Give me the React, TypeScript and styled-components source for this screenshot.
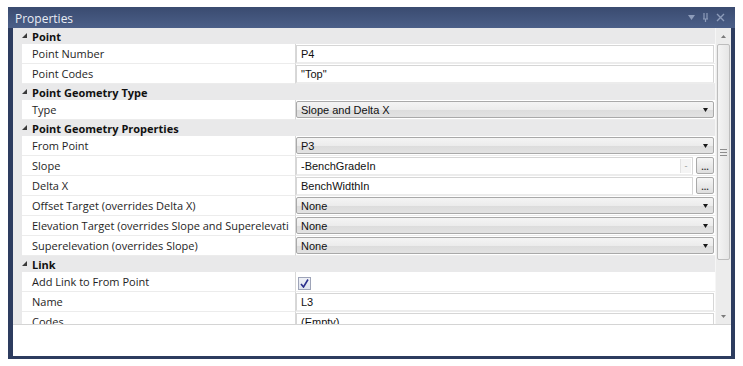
import React from 'react'
import styled, { createGlobalStyle } from 'styled-components'

const GlobalStyle = createGlobalStyle`
  html, body {
    margin: 0;
    padding: 0;
    background: #ffffff;
  }
  body {
    font-family: "Open Sans", "Noto Sans", sans-serif;
  }
`

type Prop = {
  label: string
  value?: string
  kind?: 'text' | 'select' | 'check' | 'builder' | 'expr'
}

type Category = {
  title: string
  props: Prop[]
}

const categories: Category[] = [
  {
    title: 'Point',
    props: [
      { label: 'Point Number', value: 'P4' },
      { label: 'Point Codes', value: '"Top"' },
    ],
  },
  {
    title: 'Point Geometry Type',
    props: [{ label: 'Type', value: 'Slope and Delta X', kind: 'select' }],
  },
  {
    title: 'Point Geometry Properties',
    props: [
      { label: 'From Point', value: 'P3', kind: 'select' },
      { label: 'Slope', value: '-BenchGradeIn', kind: 'expr' },
      { label: 'Delta X', value: 'BenchWidthIn', kind: 'builder' },
      { label: 'Offset Target (overrides Delta X)', value: 'None', kind: 'select' },
      { label: 'Elevation Target (overrides Slope and Superelevati', value: 'None', kind: 'select' },
      { label: 'Superelevation (overrides Slope)', value: 'None', kind: 'select' },
    ],
  },
  {
    title: 'Link',
    props: [
      { label: 'Add Link to From Point', kind: 'check' },
      { label: 'Name', value: 'L3' },
      { label: 'Codes', value: '(Empty)' },
    ],
  },
]

const Arrow = () => (
  <svg width="5" height="4" viewBox="0 0 5 4">
    <path d="M0 0 H5 L2.5 4 Z" fill="#1a1a1a" />
  </svg>
)

const Expander = () => (
  <svg width="5" height="5" viewBox="0 0 5 5">
    <path d="M5 0 V5 H0 Z" fill="#3a3a3a" />
  </svg>
)

const App: React.FC = () => {
  return (
    <>
      <GlobalStyle />
      <Window>
        <TitleBar>
          <Title>Properties</Title>
          <TitleButtons>
            <svg width="7" height="5" viewBox="0 0 7 5">
              <path d="M0 0 H7 L3.5 5 Z" fill="#8d9cba" />
            </svg>
            <svg width="7" height="9" viewBox="0 0 7 9">
              <path d="M2 0 V6 M5 0 V6 M1 6 H6 M3.5 6 V9" stroke="#8d9cba" strokeWidth="1.2" fill="none" />
            </svg>
            <svg width="9" height="9" viewBox="0 0 9 9">
              <path d="M1 1 L8 8 M8 1 L1 8" stroke="#8d9cba" strokeWidth="1.4" />
            </svg>
          </TitleButtons>
        </TitleBar>
        <Body>
          <GridArea>
            <List>
              {categories.map((cat) => (
                <React.Fragment key={cat.title}>
                  <CategoryRow>
                    <ExpanderCell>
                      <Expander />
                    </ExpanderCell>
                    <CategoryTitle>{cat.title}</CategoryTitle>
                  </CategoryRow>
                  {cat.props.map((p) => (
                    <PropRow key={p.label}>
                      <Gutter />
                      <LabelCell>{p.label}</LabelCell>
                      <ValueCell>
                        {p.kind === 'select' && (
                          <Select>
                            <span>{p.value}</span>
                            <Arrow />
                          </Select>
                        )}
                        {p.kind === 'check' && (
                          <CheckBox>
                            <svg width="9" height="9" viewBox="0 0 9 9">
                              <path d="M1 5 L3.5 8 L8 0.5" stroke="#2b2f8c" strokeWidth="1.6" fill="none" />
                            </svg>
                          </CheckBox>
                        )}
                        {(p.kind === 'expr' || p.kind === 'builder') && (
                          <EditorRow>
                            <TextBox>
                              <span>{p.value}</span>
                              {p.kind === 'expr' && <SmallButton>-</SmallButton>}
                            </TextBox>
                            <EllipsisButton>...</EllipsisButton>
                          </EditorRow>
                        )}
                        {(!p.kind || p.kind === 'text') && (
                          <TextBox>
                            <span>{p.value}</span>
                          </TextBox>
                        )}
                      </ValueCell>
                    </PropRow>
                  ))}
                </React.Fragment>
              ))}
            </List>
            <ScrollBar>
              <ScrollArrow>
                <svg width="5" height="3" viewBox="0 0 5 3">
                  <path d="M0 3 H5 L2.5 0 Z" fill="#7a7a7a" />
                </svg>
              </ScrollArrow>
              <Track>
                <Thumb>
                  <Grip />
                  <Grip />
                  <Grip />
                </Thumb>
              </Track>
              <ScrollArrow>
                <svg width="5" height="3" viewBox="0 0 5 3">
                  <path d="M0 0 H5 L2.5 3 Z" fill="#7a7a7a" />
                </svg>
              </ScrollArrow>
            </ScrollBar>
          </GridArea>
          <Description />
        </Body>
      </Window>
    </>
  )
}

const Window = styled.div`
  margin: 7px 0 0 8px;
  width: 727px;
  height: 352px;
  background: #2d3c5f;
  display: flex;
  flex-direction: column;
  padding: 0 4px 3px 5px;
  box-sizing: border-box;
`

const TitleBar = styled.div`
  height: 21px;
  flex: none;
  display: flex;
  align-items: center;
  justify-content: space-between;
  background: linear-gradient(#3a4b70, #4b5f88);
  margin: 0 -4px 0 -5px;
  padding: 0 10px 0 7px;
`

const Title = styled.div`
  color: #e9edf5;
  font-size: 12px;
  padding-top: 1px;
`

const TitleButtons = styled.div`
  display: flex;
  align-items: center;
  gap: 7px;
`

const Body = styled.div`
  flex: 1;
  display: flex;
  flex-direction: column;
  background: #ffffff;
  min-height: 0;
`

const GridArea = styled.div`
  height: 296px;
  flex: none;
  display: flex;
  background: #ebebec;
  border-bottom: 1px solid #d4d4d4;
`

const List = styled.div`
  flex: 1;
  overflow: hidden;
  display: flex;
  flex-direction: column;
`

const CategoryRow = styled.div`
  height: 16px;
  flex: none;
  display: flex;
  align-items: center;
  background: #e9e9ea;
`

const ExpanderCell = styled.div`
  width: 19px;
  display: flex;
  justify-content: center;
  padding-left: 3px;
  box-sizing: border-box;
  margin-bottom: 2px;
`

const CategoryTitle = styled.div`
  font-weight: 700;
  font-size: 11px;
  color: #111;
`

const PropRow = styled.div`
  height: 20px;
  flex: none;
  display: flex;
`

const Gutter = styled.div`
  width: 9px;
  flex: none;
  background: #e9e9ea;
`

const LabelCell = styled.div`
  width: 273px;
  flex: none;
  background: #ffffff;
  border-bottom: 1px solid #ececec;
  box-sizing: border-box;
  padding-left: 10px;
  display: flex;
  align-items: center;
  font-size: 11px;
  color: #1e1e1e;
  white-space: nowrap;
  overflow: hidden;
`

const ValueCell = styled.div`
  flex: 1;
  background: #ffffff;
  border-left: 1px solid #d8d8d8;
  border-bottom: 1px solid #ececec;
  display: flex;
  align-items: stretch;
  padding: 1px 1px 0 0;
  box-sizing: border-box;
  min-width: 0;
`

const TextBox = styled.div`
  flex: 1;
  display: flex;
  align-items: center;
  justify-content: space-between;
  border: 1px solid #d6d6d6;
  border-bottom-color: #ececec;
  background: #ffffff;
  padding-left: 4px;
  font-family: "Liberation Sans", Arial, sans-serif;
  font-size: 11px;
  color: #111;
  overflow: hidden;
  white-space: nowrap;
`

const Select = styled.div`
  flex: 1;
  display: flex;
  align-items: center;
  justify-content: space-between;
  border: 1px solid #a9a9a9;
  border-radius: 2px;
  background: linear-gradient(#f4f4f4 0%, #ececec 50%, #dcdcdc 51%, #e2e2e2 100%);
  padding: 0 5px 0 4px;
  font-family: "Liberation Sans", Arial, sans-serif;
  font-size: 11px;
  color: #111;
  margin-bottom: 1px;
`

const EditorRow = styled.div`
  flex: 1;
  display: flex;
  gap: 3px;
`

const SmallButton = styled.div`
  width: 10px;
  align-self: stretch;
  margin: 1px 1px 1px 0;
  border-left: 1px solid #e2e2e2;
  background: #f4f4f4;
  color: #999;
  font-size: 9px;
  display: flex;
  align-items: center;
  justify-content: center;
`

const EllipsisButton = styled.div`
  width: 16px;
  flex: none;
  border: 1px solid #a9a9a9;
  border-radius: 2px;
  background: linear-gradient(#f6f6f6, #dedede);
  font-size: 9px;
  font-weight: 700;
  color: #333;
  display: flex;
  align-items: flex-end;
  justify-content: center;
  line-height: 12px;
  margin-bottom: 1px;
`

const CheckBox = styled.div`
  width: 11px;
  height: 11px;
  margin: 4px 0 0 2px;
  border: 1px solid #9ea4b8;
  background: linear-gradient(#eef0f6, #dfe3ee);
  display: flex;
  align-items: center;
  justify-content: center;
`

const ScrollBar = styled.div`
  width: 15px;
  flex: none;
  display: flex;
  flex-direction: column;
  background: #ececec;
  border-left: 1px solid #f6f6f6;
`

const ScrollArrow = styled.div`
  height: 16px;
  flex: none;
  display: flex;
  align-items: center;
  justify-content: center;
`

const Track = styled.div`
  flex: 1;
  display: flex;
  flex-direction: column;
  padding: 0 1px;
`

const Thumb = styled.div`
  height: 214px;
  border: 1px solid #bdbdbd;
  border-radius: 2px;
  background: linear-gradient(90deg, #f4f4f4, #e6e6e6);
  display: flex;
  flex-direction: column;
  align-items: center;
  justify-content: center;
  gap: 2px;
`

const Grip = styled.div`
  width: 7px;
  height: 1px;
  background: #8d8d8d;
`

const Description = styled.div`
  flex: 1;
  background: #ffffff;
`

export default App
